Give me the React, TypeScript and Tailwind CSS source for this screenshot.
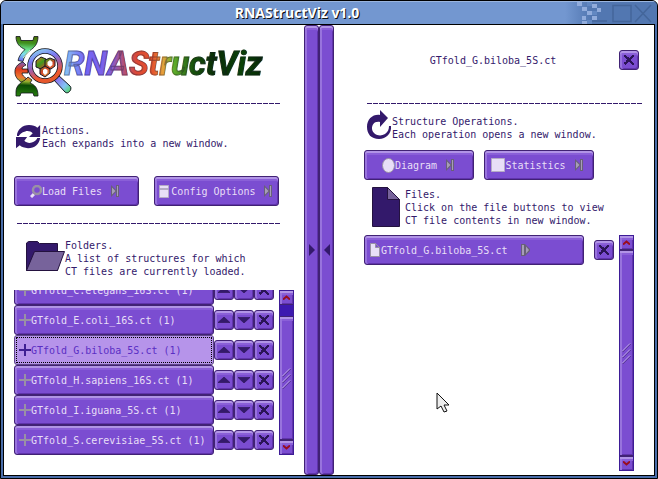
import React from 'react';

const face =
  'rounded-[3px] border border-[#412274] bg-[#7b4dd1] shadow-[inset_0_2px_0_#b194e6,inset_2px_0_0_#9873dd,inset_0_4px_0_#8a5fd8,inset_-1px_-1px_0_#6034ac]';

function PixelButton({ className = '', children, label, selected = false }: { className?: string; children: React.ReactNode; label?: string; selected?: boolean }) {
  return (
    <button
      type="button"
      aria-label={label}
      className={
        selected
          ? `flex items-center rounded-[3px] border border-[#5d4687] bg-[#b694ea] text-[#5a2ec4] outline-1 outline-dotted outline-black -outline-offset-3 ${className}`
          : `flex items-center text-[#e8dff7] ${face} ${className}`
      }
    >
      {children}
    </button>
  );
}

function Rule() {
  return <hr className="mx-[3px] h-px border-0 bg-[repeating-linear-gradient(90deg,#33196b_0_5px,transparent_5px_6px)]" />;
}

const crossRows = [
  'XX......XX',
  'XXX....XXX',
  '.XXXX.XXX.',
  '..XXXXXX..',
  '...XXXX...',
  '..XXXXX...',
  '..XXXXXX..',
  'XXXX..XXX.',
  'XXX....XXX',
  '.X......XX',
];

function CloseIcon() {
  return (
    <svg width="12" height="12" viewBox="-1 -1 12 12" shapeRendering="crispEdges" fill="#2b1457" className="shrink-0">
      {crossRows.flatMap((row, y) =>
        row.split('').map((cell, x) => (cell === 'X' ? <rect key={`${x}-${y}`} x={x} y={y} width="1" height="1" /> : null)),
      )}
    </svg>
  );
}

function Triangle({ down = false }: { down?: boolean }) {
  return (
    <svg width="12" height="6" viewBox="0 0 12 6" fill="#33196b" stroke="#281350" strokeWidth="0.6" className="mb-px">
      <path d={down ? 'M0 .5h12L6 6z' : 'M0 5.5h12L6 0z'} />
    </svg>
  );
}

function NextIcon() {
  return (
    <svg width="8" height="12" viewBox="0 0 8 12">
      <path d="M0 0l5 5v2l-5 5z" fill="#696078" />
      <path d="M1 2.500v7L4.500 6z" fill="#a79db8" />
      <path d="M5 0h3v12H5z" fill="#696078" />
      <path d="M6 1h1v10H6z" fill="#a79db8" />
    </svg>
  );
}

function PlayIcon() {
  return (
    <svg width="9" height="12" viewBox="0 0 9 12">
      <path d="M0 0h4v12H0zM4 0l5 5v2l-5 5z" fill="#696078" />
      <path d="M1 1h2v10H1zM5 2.500v7L8 6z" fill="#a79db8" />
    </svg>
  );
}

function CloseButton() {
  return (
    <PixelButton label="Close" className="size-5 shrink-0 justify-center">
      <CloseIcon />
    </PixelButton>
  );
}

function ScrollBar({ gap = false, className = '' }: { gap?: boolean; className?: string }) {
  return (
    <div className={`flex w-[15px] shrink-0 flex-col border border-[#3d1b96] bg-[#3d19b0] ${className}`}>
      <button type="button" aria-label="Scroll up" className={`flex h-[14px] shrink-0 items-center justify-center ${face} rounded-none border-x-0 border-t-0`}>
        <svg width="7" height="5" viewBox="0 0 7 5" fill="none" stroke="#9a0c1c" strokeWidth="2"><path d="M0 4.500l3.500-3 3.500 3" /></svg>
      </button>
      <div className={`flex min-h-0 flex-1 items-center justify-center ${face} rounded-none border-x-0 ${gap ? 'mt-[11px]' : ''}`}>
        <svg width="9" height="21" viewBox="0 0 9 21" fill="none">
          <path d="M.5 9l8-8M.5 15l8-8M.5 21l8-8" stroke="#412274" />
          <path d="M0 8.500l8-8M0 14.500l8-8M0 20.500l8-8" stroke="#c6aff0" />
        </svg>
      </div>
      <button type="button" aria-label="Scroll down" className={`flex h-[14px] shrink-0 items-center justify-center ${face} rounded-none border-x-0 border-b-0`}>
        <svg width="7" height="5" viewBox="0 0 7 5" fill="none" stroke="#9a0c1c" strokeWidth="2"><path d="M0 .5l3.500 3 3.500-3" /></svg>
      </button>
    </div>
  );
}

function Logo() {
  return (
    <svg width="58" height="62" viewBox="0 0 58 62" className="shrink-0">
      <defs>
        <linearGradient id="dna" x1="4" y1="0" x2="0" y2="62" gradientUnits="userSpaceOnUse">
          <stop offset="0" stopColor="#4c6a00" />
          <stop offset=".12" stopColor="#3f8f1c" />
          <stop offset=".22" stopColor="#6cdf8c" />
          <stop offset=".3" stopColor="#7fe0ee" />
          <stop offset=".4" stopColor="#6b74f4" />
          <stop offset=".48" stopColor="#a0507c" />
          <stop offset=".55" stopColor="#e03c1c" />
          <stop offset=".68" stopColor="#ee7b32" />
          <stop offset=".74" stopColor="#8fae2c" />
          <stop offset=".8" stopColor="#0a4a04" />
          <stop offset="1" stopColor="#2e8a10" />
        </linearGradient>
        <linearGradient id="lens" x1="22" y1="14" x2="34" y2="48" gradientUnits="userSpaceOnUse">
          <stop offset="0" stopColor="#8fd6ef" />
          <stop offset=".3" stopColor="#7a7cf4" />
          <stop offset=".55" stopColor="#a85c9c" />
          <stop offset=".8" stopColor="#f0572c" />
          <stop offset="1" stopColor="#e0582c" />
        </linearGradient>
        <linearGradient id="grip" x1="42" y1="44" x2="56" y2="56" gradientUnits="userSpaceOnUse">
          <stop offset="0" stopColor="#8c6cf0" />
          <stop offset=".6" stopColor="#82c4f4" />
          <stop offset="1" stopColor="#54d66c" />
        </linearGradient>
        <linearGradient id="cells" x1="22" y1="22" x2="38" y2="42" gradientUnits="userSpaceOnUse">
          <stop offset="0" stopColor="#f0701c" />
          <stop offset=".3" stopColor="#3f9a1c" />
          <stop offset=".6" stopColor="#d2442c" />
          <stop offset="1" stopColor="#e6b838" />
        </linearGradient>
      </defs>
      <g fill="url(#dna)" stroke="#10141c" strokeWidth=".8" strokeLinejoin="round">
        <path d="M2 1.500h4l1 4h12l1-4h4c0 8-4 11-8 14-4 3-6 6-7 11l-5-1c1-5 4-8 7-11C6 12 2 9 2 1.500z" />
        <path d="M9 27C3 29 .5 33 1 38c.5 5 4 8 8 10l4-4c-3-2-5-4-5-6h6v-4H8c0-2 2-3 4-4z" />
        <path d="M2 61v-4c0-6 4-9 9-12l3-3 4 3-2 3c5 2 8 5 8 13h-4l-1-3H7l-1 3z" />
      </g>
      <path d="M9 23l7-8" stroke="#c9f3c4" strokeWidth="1" fill="none" />
      <path d="M39 44l4-5 13 12c3 3-2 9-5 6z" fill="url(#grip)" stroke="#10141c" strokeLinejoin="round" />
      <circle cx="31" cy="31" r="15" fill="white" stroke="#10141c" strokeWidth="5.500" />
      <circle cx="31" cy="31" r="15" fill="none" stroke="url(#lens)" strokeWidth="4" />
      <g fill="url(#cells)" stroke="#1c1424" strokeWidth="1">
        <path d="M22 26l5-4 5 2v6l-5 4-5-2z" />
        <path d="M31 25l5-2 5 2v6l-4 3-6-2z" />
        <path d="M26 34l5-3 5 3v4l-5 4-5-3z" />
      </g>
      <path d="M33.500 27l2.500-2 2.500 2v3l-2.500 2-2.500-2zM29 35l2-1.500 2.500 1.500v3l-2.500 2-2-2z" fill="white" />
    </svg>
  );
}

const folders = [
  'GTfold_C.elegans_16S.ct (1)',
  'GTfold_E.coli_16S.ct (1)',
  'GTfold_G.biloba_5S.ct (1)',
  'GTfold_H.sapiens_16S.ct (1)',
  'GTfold_I.iguana_5S.ct (1)',
  'GTfold_S.cerevisiae_5S.ct (1)',
];

function FolderRow({ name, selected }: { name: string; selected: boolean }) {
  return (
    <li className="flex h-[30px] shrink-0 items-center">
      <PixelButton selected={selected} className="h-[30px] w-[200px] pl-1">
        <svg width="12" height="12" viewBox="0 0 12 12" className={selected ? 'text-[#3f1f93]' : 'text-[#9990a5]'} shapeRendering="crispEdges">
          <path d="M5 0h2v5h5v2H7v5H5V7H0V5h5z" fill="currentColor" />
        </svg>
        {name}
      </PixelButton>
      <PixelButton label="Move up" className="size-5 justify-center"><Triangle /></PixelButton>
      <PixelButton label="Move down" className="size-5 justify-center"><Triangle down /></PixelButton>
      <CloseButton />
    </li>
  );
}

function LeftPanel() {
  return (
    <section className="flex min-h-0 w-[300px] shrink-0 flex-col px-[10px] pb-5">
      <div className="mt-[10px] flex h-[62px] items-center">
        <Logo />
        <h1 className="-ml-2 bg-[linear-gradient(90deg,#8ac9f5_0%,#7465f5_10%,#7d5fe6_22%,#a8528c_28%,#dc4836_36%,#e5552d_44%,#e7a23b_49%,#65b32c_54%,#17520b_64%,#082d06_75%,#0a4306_88%,#052404_100%)] bg-clip-text pr-1 pb-1 font-[Roboto,sans-serif] text-[33px] leading-9 font-bold text-transparent italic [-webkit-text-stroke:1px_#17142a66]">
          RNAStructViz
        </h1>
      </div>
      <div className="mt-[6px] pr-[10px]"><Rule /></div>
      <div className="mt-[19px] flex h-7 items-center">
        <svg width="28" height="26" viewBox="0 0 28 26" className="shrink-0 pl-0.5" fill="#33196b">
          <path d="M1 12C1 5 7 0 14 0c4 0 7 1 9 3l3-3v13H14l4-4c-2-2-5-3-8-2-4 1-6 3-7 5z" />
          <path d="M26 14c-1 7-6 11-13 11-4 0-7-1-9-3l-4 3V13h12l-3 4c2 2 5 3 8 2 3-1 5-3 6-5z" />
        </svg>
        <p>Actions.<br />Each expands into a new window.</p>
      </div>
      <div className="mt-[25px] grid grid-cols-2 gap-[15px] pr-[15px]">
        <PixelButton className="h-[30px] justify-center pr-1">
          <svg width="12" height="13" viewBox="0 0 12 13">
            <path d="M1 12l3-3" stroke="#e8dff7" strokeWidth="3" />
            <circle cx="7" cy="5" r="4" fill="none" stroke="#9990a5" strokeWidth="2.500" />
          </svg>
          Load Files
          <span className="ml-[9px]"><NextIcon /></span>
        </PixelButton>
        <PixelButton className="h-[30px] justify-center pr-0.5">
          <svg width="11" height="13" viewBox="0 0 11 13" className="mr-px shrink-0">
            <path d="M.5 .5h9v3h-9zM.5 4.500h9v8h-9z" fill="#e8dff7" stroke="#b5abc5" />
          </svg>
          Config Options
          <span className="ml-2"><NextIcon /></span>
        </PixelButton>
      </div>
      <div className="mt-[17px] pr-[10px]"><Rule /></div>
      <div className="mt-[14px] flex h-[40px] items-center pl-3">
        <svg width="39" height="30" viewBox="0 0 39 30" className="mb-1 shrink-0" stroke="#24123f">
          <path d="M.5 2l2-1.500h9l2 2h18v27H.5z" fill="#33196b" />
          <path d="M8.500 10.500h30l-7 19H.5z" fill="#77639b" />
        </svg>
        <p>Folders.<br />A list of structures for which<br />CT files are currently loaded.</p>
      </div>
      <div className="mt-[12px] flex min-h-0 flex-1 justify-between">
        <ul className="flex min-h-0 flex-col justify-end overflow-hidden">
          {folders.map((name, i) => <FolderRow key={name} name={name} selected={i === 2} />)}
        </ul>
        <ScrollBar gap />
      </div>
    </section>
  );
}

function RightPanel() {
  return (
    <section className="flex min-h-0 min-w-0 flex-1 flex-col pr-[9px] pb-1 pl-[30px]">
      <div className="mt-[25px] flex items-center pr-[6px]">
        <h2 className="flex-1 pl-[3px] text-center">GTfold_G.biloba_5S.ct</h2>
        <CloseButton />
      </div>
      <div className="mt-[33px]"><Rule /></div>
      <div className="mt-[6px] flex h-[32px] items-center">
        <svg width="28" height="29" viewBox="-1 0 28 29" className="mb-[3px] shrink-0" fill="#33196b">
          <path d="M15 0l8 8-8 9v-5c-6-1-8 3-8 7 1 6 8 8 13 5 3-2 4-5 4-8h2c1 7-5 13-12 13C6 29 2 24 2 17 2 9 8 4 15 5z" />
        </svg>
        <p className="pt-1">Structure Operations.<br />Each operation opens a new window.</p>
      </div>
      <div className="mt-2 flex gap-[10px]">
        <PixelButton className="h-[30px] w-[110px] justify-center pr-0.5">
          <svg width="13" height="15" viewBox="0 0 13 15"><ellipse cx="6.500" cy="7.500" rx="6" ry="7" fill="#e8dff7" stroke="#9990a5" /></svg>
          Diagram
          <span className="ml-[9px]"><NextIcon /></span>
        </PixelButton>
        <PixelButton className="h-[30px] w-[110px] justify-center pr-1">
          <svg width="14" height="14" viewBox="0 0 14 14" className="shrink-0"><path d="M.5 .5h13v13H.5z" fill="#e8dff7" stroke="#b5abc5" /></svg>
          Statistics
          <span className="ml-[9px]"><NextIcon /></span>
        </PixelButton>
      </div>
      <div className="mt-[7px] flex h-10 items-center pl-2">
        <svg width="28" height="40" viewBox="0 0 28 40" className="mr-[5px] shrink-0" stroke="#24123f">
          <path d="M.5 .5h15l12 12v27H.5z" fill="#33196b" />
          <path d="M15.500 .5v12h12z" fill="#77639b" />
        </svg>
        <p>Files.<br />Click on the file buttons to view<br />CT file contents in new window.</p>
      </div>
      <div className="mt-[8px] flex min-h-0 flex-1 items-start">
        <PixelButton className="h-[30px] w-[220px] pl-[5px]">
          <svg width="10" height="14" viewBox="0 0 10 14" className="mr-px" fill="#e8dff7" stroke="#9990a5">
            <path d="M.5 .5h5l4 4v9h-9zM5.500 .5v4h4" />
          </svg>
          GTfold_G.biloba_5S.ct
          <span className="ml-[14px]"><PlayIcon /></span>
        </PixelButton>
        <div className="mt-[5px] ml-[10px]"><CloseButton /></div>
        <ScrollBar className="ml-[5px] self-stretch" />
      </div>
    </section>
  );
}

function Splitter({ flip = false }: { flip?: boolean }) {
  return (
    <button type="button" aria-label={flip ? 'Collapse right panel' : 'Collapse left panel'} className={`flex w-[15px] items-center justify-center ${face}`}>
      <svg width="6" height="12" viewBox="0 0 6 12" fill="#33196b"><path d={flip ? 'M6 0v12L0 6z' : 'M0 0v12l6-6z'} /></svg>
    </button>
  );
}

export default function App() {
  return (
    <div className="flex h-screen flex-col overflow-hidden rounded-t-md border border-black bg-[#4a6da9] px-0.5 pb-0.5 font-['DejaVu_Sans_Mono',monospace] text-[10px] leading-[13px] whitespace-nowrap text-[#33196b]">
      <header className="-mx-0.5 flex h-[23px] shrink-0 items-center border-t border-[#9ab5de] bg-[linear-gradient(90deg,#7397d0_0_86%,#5277b1_90%)]">
        <div className="flex-1" />
        <div className="font-['Open_Sans','Noto_Sans',sans-serif] text-[14px] leading-5 font-bold text-white [text-shadow:1px_1px_0_#111]">RNAStructViz v1.0</div>
        <div className="flex flex-1 justify-end pr-1 pl-[60px]">
          <svg width="76" height="22" viewBox="0 0 76 22" fill="none" className="ml-auto shrink-0">
            <path d="M0 0h5v4H0zM5 5h5v4H5zM10 9h5v4h-5zM5 14h4v4H5zM15 2h5v4h-5zM20 6h4v4h-4zM15 14h5v4h-5zM5 19h5v3H5z" fill="#91acdc" />
            <path d="M10 0h5v4h-5zM15 9h5v4h-5zM10 18h5v4h-5z" fill="#6288c2" />
            <path d="M15 19h15M36 3.500h18v16H36zM58 3l16 17M74 3L58 20" stroke="#44669b" strokeWidth="1.500" />
          </svg>
        </div>
      </header>
      <main className="flex min-h-0 flex-1 border border-black bg-white">
        <LeftPanel />
        <Splitter />
        <Splitter flip />
        <RightPanel />
      </main>
      <svg width="14" height="21" viewBox="0 0 14 21" className="pointer-events-none absolute top-[392px] left-[436px]" aria-hidden="true">
        <path d="M1 1v16l4-3 3 6 3-1-3-6h5z" fill="#eee" stroke="#111" />
      </svg>
    </div>
  );
}
